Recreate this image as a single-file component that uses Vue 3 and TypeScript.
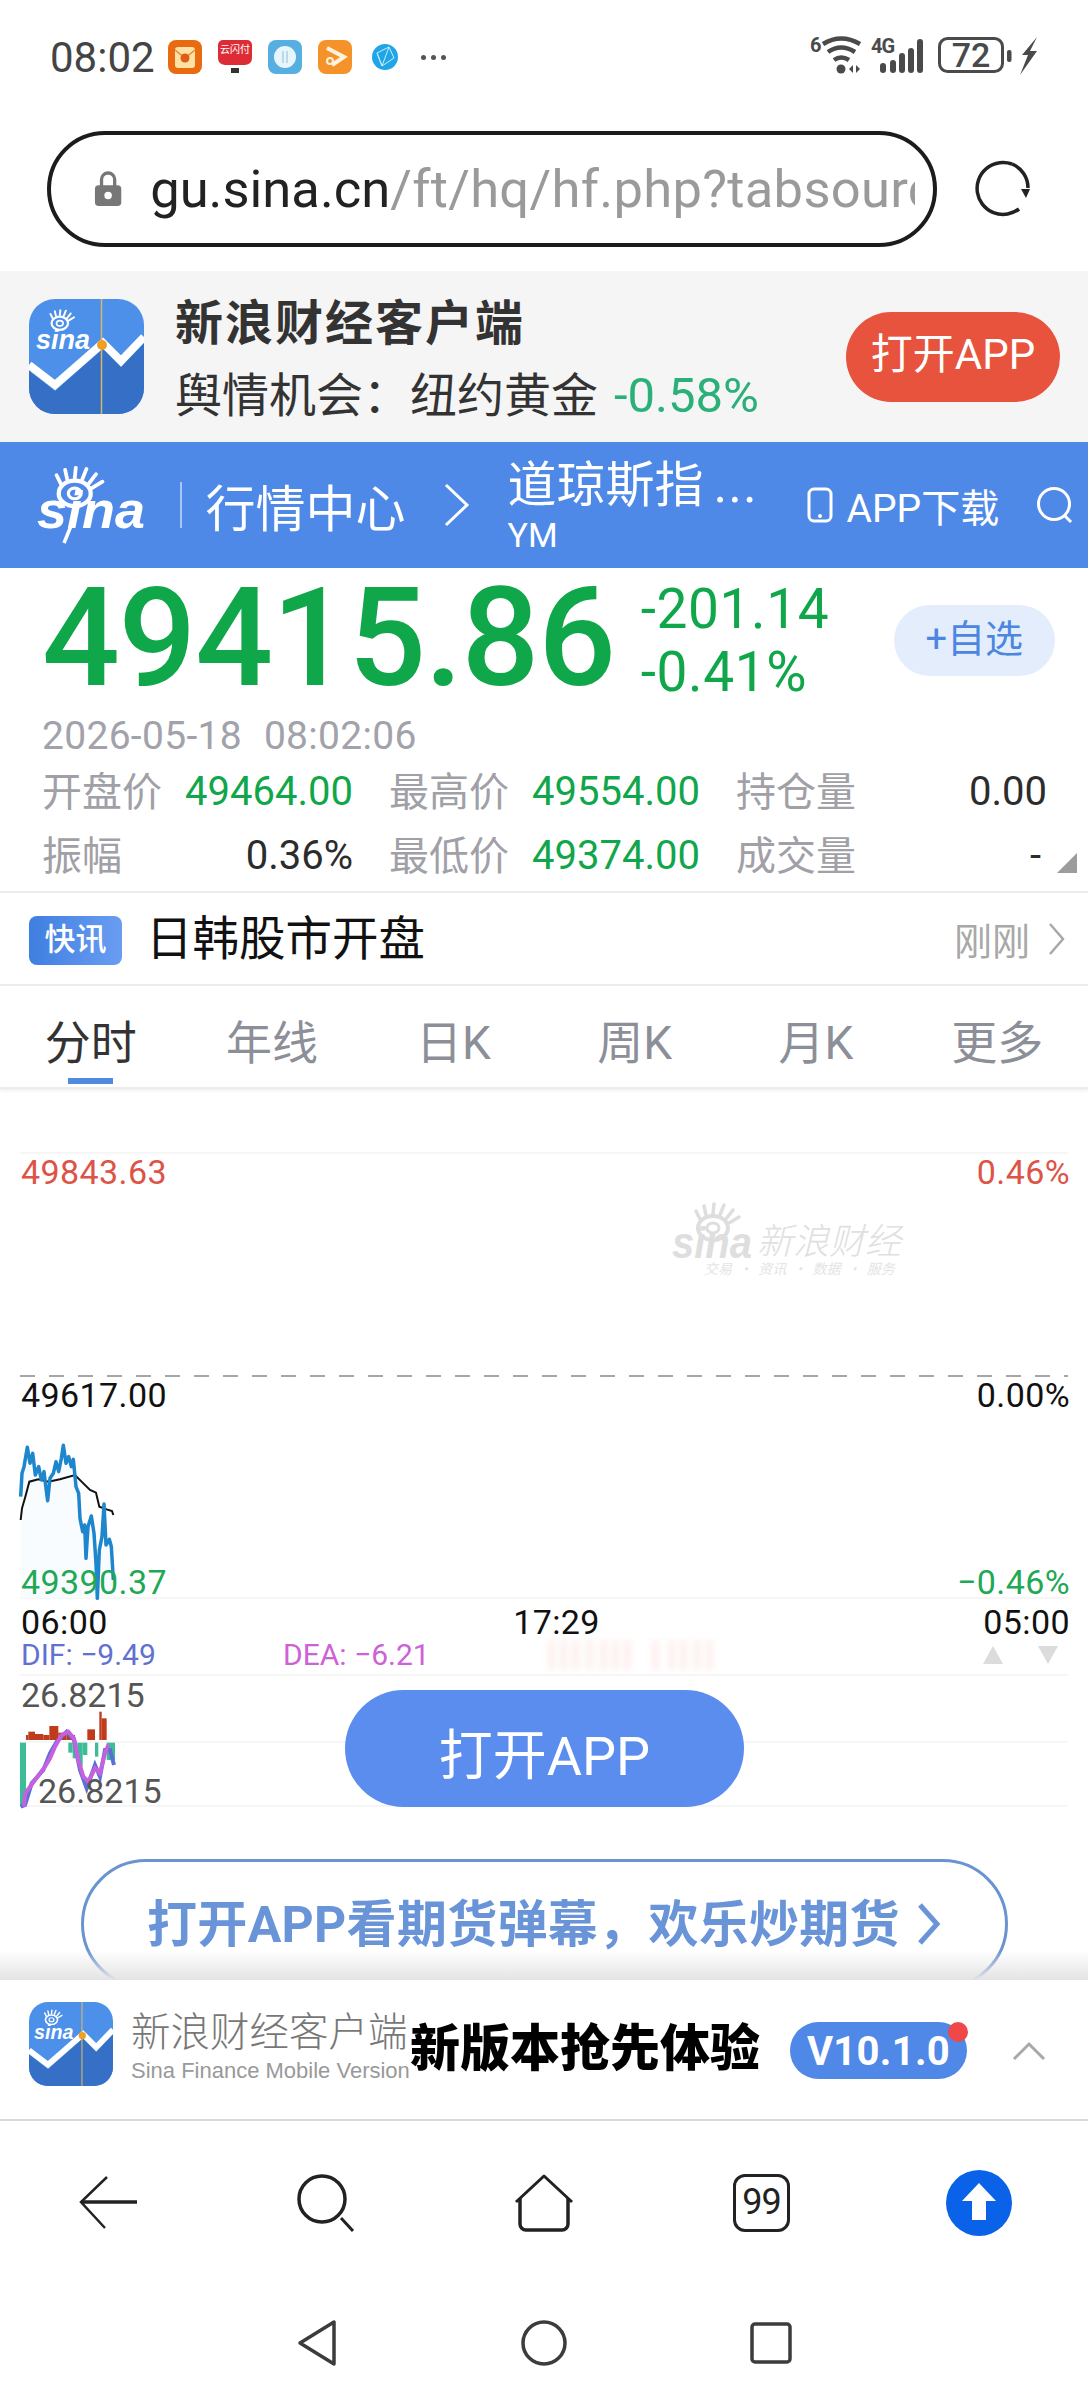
<script setup lang="ts">
interface QuoteCell {
  label: string;
  value: string;
  tone: "down" | "flat";
}

const quoteCells: QuoteCell[] = [
  { label: "开盘价", value: "49464.00", tone: "down" },
  { label: "最高价", value: "49554.00", tone: "down" },
  { label: "持仓量", value: "0.00", tone: "flat" },
  { label: "振幅", value: "0.36%", tone: "flat" },
  { label: "最低价", value: "49374.00", tone: "down" },
  { label: "成交量", value: "-", tone: "flat" },
];

const tabs = ["分时", "年线", "日K", "周K", "月K", "更多"];

// page coordinates, the svg viewBox starts at the top of the chart
const toPath = (pts: number[][]) =>
  "M" + pts.map(([x, y]) => `${x / 3} ${1430 + y / 3}`).join("L");

const priceLine = toPath([
  [62, 200], [66, 130], [72, 110], [82, 52], [90, 100], [98, 70], [106, 135], [116, 110], [124, 150],
  [132, 125], [138, 175], [143, 212], [150, 145], [160, 130], [168, 95], [176, 125], [184, 85], [190, 46],
  [198, 100], [206, 80], [214, 110], [220, 88], [228, 170], [236, 190], [240, 265], [248, 305], [254, 285],
  [258, 385], [264, 290], [274, 258], [282, 310], [288, 400], [292, 505], [298, 360], [306, 320], [312, 222],
  [318, 345], [328, 328], [334, 350], [340, 450],
]);
const avgLine = toPath([
  [62, 270], [66, 235], [76, 200], [88, 155], [115, 148], [145, 155], [180, 148], [225, 135], [250, 160],
  [270, 180], [288, 188], [298, 230], [320, 238], [336, 243], [340, 255],
]);
const fillArea = priceLine + "L113.3 1598L20.6 1598Z";
const deaLine = toPath([
  [72, 1130], [76, 1090], [105, 1050], [135, 1010], [150, 985], [165, 950], [185, 915], [205, 905], [222, 925],
  [235, 990], [250, 1040], [265, 1055], [285, 1015], [300, 1030], [315, 970], [325, 945],
]);
const difLine = toPath([
  [62, 1130], [75, 1125], [95, 1060], [130, 1020], [150, 970], [170, 935], [200, 905], [222, 930], [240, 1020],
  [260, 1075], [285, 1005], [300, 1040], [315, 960], [330, 960], [342, 1005],
]);

// macd bars as [x1, x2, y] in the 3x crop units
const redBars = [
  [78, 85, 915], [85, 105, 905], [105, 130, 912], [130, 148, 915], [148, 175, 888], [175, 200, 908],
  [200, 225, 915], [262, 285, 898], [298, 305, 845], [305, 320, 865],
];
const greenBars = [
  [60, 78, 1130], [205, 218, 968], [218, 232, 985], [232, 248, 1010], [248, 262, 975], [285, 295, 980], [320, 345, 990],
];
const smudges = [548, 560, 572, 586, 600, 612, 624, 652, 668, 680, 694, 706];
</script>

<template>
  <div class="page">
    <svg class="defs" width="0" height="0" aria-hidden="true">
      <symbol id="sina-eye" viewBox="0 0 60 40">
        <ellipse cx="26" cy="26" rx="15" ry="12" fill="none" stroke="currentColor" stroke-width="4" />
        <ellipse cx="26" cy="26" rx="6" ry="5" fill="none" stroke="currentColor" stroke-width="3" />
        <path d="M13 17L9 9M19 13L17 4M26 12L27 2M33 13L37 3M39 17L46 8M42 21L52 15" stroke="currentColor" stroke-width="3.5" stroke-linecap="round" />
      </symbol>
      <symbol id="app-icon" viewBox="0 0 115 115">
        <rect width="115" height="115" rx="26" fill="#4d90ea" />
        <path d="M0 72L26 92L74 50L92 68L115 44V89a26 26 0 0 1-26 26H26A26 26 0 0 1 0 89Z" fill="#3570c6" />
        <path d="M0 66L26 86L74 44L92 62L115 38" fill="none" stroke="#fff" stroke-width="8" />
        <path d="M72.500 0V115" stroke="#d9b566" stroke-width="1.500" />
        <circle cx="73" cy="46" r="5" fill="#f0a020" />
        <use href="#sina-eye" x="16" y="10" width="34" height="22" color="#fff" />
        <text x="7" y="50" class="icon-sina">sina</text>
      </symbol>
    </svg>

    <header class="status">
      <span class="clock">08:02</span>
      <div class="notif">
        <svg width="34" height="34" viewBox="0 0 34 34">
          <rect width="34" height="34" rx="8" fill="#ea6a12" />
          <rect x="7" y="7" width="20" height="21" rx="3" fill="#fde2a6" />
          <path d="M7 10L17 18L27 10" fill="none" stroke="#e28a38" stroke-width="1.500" />
          <circle cx="17" cy="18" r="4.500" fill="#e05a18" />
        </svg>
        <svg width="34" height="34" viewBox="0 0 34 34">
          <path d="M5 0H29A5 5 0 0 1 34 5V18Q34 24 27 25H7Q0 24 0 18V5A5 5 0 0 1 5 0Z" fill="#dd2c35" />
          <text x="17" y="13" class="tiny-pay">云闪付</text>
          <rect x="13" y="28" width="8" height="5" fill="#333" />
        </svg>
        <svg width="34" height="34" viewBox="0 0 34 34">
          <rect width="34" height="34" rx="8" fill="#56afe0" />
          <circle cx="17" cy="17" r="11" fill="#e8f5fc" />
          <path d="M15 11V23M19 11V23" stroke="#a9cfe6" stroke-width="1.500" />
        </svg>
        <svg width="34" height="34" viewBox="0 0 34 34">
          <rect width="34" height="34" rx="8" fill="#f5922a" />
          <path d="M9 8L26 17L14 25" fill="none" stroke="#fff2dc" stroke-width="4" />
          <circle cx="12" cy="21" r="3" fill="none" stroke="#fff2dc" stroke-width="2" />
        </svg>
        <svg class="globe" width="26" height="26" viewBox="0 0 26 26">
          <circle cx="13" cy="13" r="13" fill="#1fa5e8" />
          <path d="M5 9L17 3L22 14L10 22ZM5 9L10 22M17 3L10 22" fill="none" stroke="#cdeefc" stroke-width="1" />
        </svg>
        <span class="more-dots"><i /><i /><i /></span>
      </div>
      <svg class="sys-icons" width="232" height="46" viewBox="0 0 232 46">
        <text x="2" y="18" class="sb-small">6</text>
        <path d="M15 10Q33 -1 52 10" fill="none" stroke="#4a4a4a" stroke-width="4.500" />
        <path d="M20 18Q33 9 47 18" fill="none" stroke="#4a4a4a" stroke-width="4.500" />
        <path d="M26 26Q33 21 41 26" fill="none" stroke="#4a4a4a" stroke-width="4.500" />
        <circle cx="33" cy="35" r="4.500" fill="#4a4a4a" />
        <path d="M41 35L45 31V39ZM48 31V39L52 35Z" fill="#4a4a4a" />
        <text x="63" y="19" class="sb-small">4G</text>
        <rect x="72" y="29" width="6" height="10" rx="3" fill="#4a4a4a" />
        <rect x="82" y="26" width="6" height="13" rx="3" fill="#4a4a4a" />
        <rect x="91" y="19" width="6" height="20" rx="3" fill="#4a4a4a" />
        <rect x="100" y="14" width="6" height="25" rx="3" fill="#4a4a4a" />
        <rect x="109" y="5" width="6" height="34" rx="3" fill="#4a4a4a" />
        <rect x="131.500" y="4.500" width="63" height="33" rx="8" fill="none" stroke="#4a4a4a" stroke-width="3" />
        <text x="163" y="33" class="sb-batt">72</text>
        <rect x="199" y="16" width="4.500" height="12" rx="2" fill="#4a4a4a" />
        <path d="M229 3L214 21L220 21L212 41L229 17L222 17Z" fill="#4a4a4a" />
      </svg>
    </header>

    <div class="address">
      <div class="url-box">
        <svg width="30" height="38" viewBox="0 0 30 38">
          <path d="M8 16V9a7 7 0 0 1 14 0V16" fill="none" stroke="#777" stroke-width="3.500" />
          <rect x="1" y="15" width="28" height="22" rx="4" fill="#777" />
          <circle cx="15" cy="26" r="4" fill="#fff" />
        </svg>
        <span class="url"><b>gu.sina.cn</b>/ft/hq/hf.php?tabsource</span>
      </div>
      <svg class="reload" width="58" height="58" viewBox="0 0 58 58">
        <path d="M39 4A26 26 0 1 0 46 49" fill="none" stroke="#222" stroke-width="3.500" />
        <path d="M39 4A26 26 0 0 1 55 28" fill="none" stroke="#222" stroke-width="3.500" />
        <path d="M48 29H57L53 38Z" fill="#222" />
      </svg>
    </div>

    <section class="promo">
      <svg class="promo-icon" viewBox="0 0 115 115"><use href="#app-icon" /></svg>
      <div class="promo-text">
        <div class="promo-title">新浪财经客户端</div>
        <div class="promo-sub">舆情机会：纽约黄金<span class="promo-pct">-0.58%</span></div>
      </div>
      <div class="promo-btn">打开APP</div>
    </section>

    <nav class="topbar">
      <svg class="logo" width="110" height="78" viewBox="0 0 110 78">
        <use href="#sina-eye" x="10" y="-1" width="64" height="44" color="#fff" />
        <text x="0" y="62" class="logo-text" textLength="108" lengthAdjust="spacingAndGlyphs">sina</text>
        <path d="M34 60L27 77" stroke="#fff" stroke-width="3.500" />
      </svg>
      <span class="sep" />
      <span class="crumb">行情中心</span>
      <svg class="crumb-arrow" width="28" height="44" viewBox="0 0 28 44">
        <path d="M4 2L25 22L4 42" fill="none" stroke="#fff" stroke-width="3" />
      </svg>
      <div class="symbol">
        <div class="symbol-name">道琼斯指<span class="dots">...</span></div>
        <div class="symbol-code">YM</div>
      </div>
      <svg class="phone" width="26" height="36" viewBox="0 0 26 36">
        <rect x="2" y="2" width="22" height="32" rx="5" fill="none" stroke="#fff" stroke-width="3" />
        <circle cx="13" cy="29" r="2" fill="#fff" />
      </svg>
      <span class="download">APP下载</span>
      <svg class="search" width="38" height="38" viewBox="0 0 38 38">
        <circle cx="18" cy="18" r="15.500" fill="none" stroke="#fff" stroke-width="3" />
        <path d="M28 29L35 36" stroke="#fff" stroke-width="3" />
      </svg>
    </nav>

    <section class="quote">
      <div class="quote-top">
        <div class="price">49415.86</div>
        <div class="change">
          <div>-201.14</div>
          <div>-0.41%</div>
        </div>
        <div class="watch">+自选</div>
      </div>
      <div class="stamp"><span>2026-05-18</span><span>08:02:06</span></div>
      <div class="grid">
        <div v-for="cell in quoteCells" :key="cell.label" class="cell">
          <span class="cell-label">{{ cell.label }}</span>
          <span class="cell-value" :class="cell.tone">{{ cell.value }}</span>
        </div>
      </div>
      <span class="corner" />
    </section>

    <section class="news">
      <span class="news-tag">快讯</span>
      <span class="news-title">日韩股市开盘</span>
      <span class="news-time">刚刚</span>
      <svg width="18" height="36" viewBox="0 0 18 36">
        <path d="M2 3L15 18L2 33" fill="none" stroke="#a8a8a8" stroke-width="2.500" />
      </svg>
    </section>

    <div class="tabs">
      <span v-for="(tab, i) in tabs" :key="tab" class="tab" :class="{ active: i === 0 }">{{ tab }}</span>
    </div>

    <main class="chart">
      <svg class="plot" width="1088" height="891" viewBox="0 1089 1088 891">
        <defs>
          <filter id="soft"><feGaussianBlur stdDeviation="3" /></filter>
        </defs>
        <path d="M20 1153H1068M20 1598H1068M20 1675H1068M20 1742H1068M20 1806H1068" stroke="#f3f3f3" stroke-width="1.500" />
        <path d="M20 1376H1068" stroke="#a6a6a6" stroke-width="2" stroke-dasharray="15 14" />
        <path :d="fillArea" fill="#f9fcff" />
        <path :d="avgLine" fill="none" stroke="#111" stroke-width="2" />
        <path :d="priceLine" fill="none" stroke="#1e86cc" stroke-width="3.500" stroke-linejoin="round" />
        <rect
          v-for="bar in redBars"
          :key="bar[0]"
          :x="bar[0] / 3"
          :y="1430 + bar[2] / 3"
          :width="(bar[1] - bar[0]) / 3"
          :height="(930 - bar[2]) / 3"
          fill="#c03a1c"
        />
        <rect
          v-for="bar in greenBars"
          :key="bar[0]"
          :x="bar[0] / 3"
          :y="1430 + 938 / 3"
          :width="(bar[1] - bar[0]) / 3"
          :height="(bar[2] - 938) / 3"
          fill="#3cbd98"
        />
        <path :d="difLine" fill="none" stroke="#5a70d2" stroke-width="4" />
        <path :d="deaLine" fill="none" stroke="#c560e0" stroke-width="4" />
        <g filter="url(#soft)" opacity="0.22">
          <rect v-for="x in smudges" :key="x" :x="x" y="1640" width="7" height="30" fill="#f2b9b0" />
        </g>
        <path d="M640 1661H718" stroke="#efb0a8" stroke-width="2" filter="url(#soft)" />
        <g class="mark">
          <use href="#sina-eye" x="686" y="1202" width="62" height="40" color="#dedede" />
          <text x="672" y="1258" class="mark-logo" textLength="80" lengthAdjust="spacingAndGlyphs">sina</text>
          <text x="757" y="1254" class="mark-cn">新浪财经</text>
          <text x="704" y="1274" class="mark-sub">交易 · 资讯 · 数据 · 服务</text>
        </g>
      </svg>

      <div class="axis axis-hi"><span>49843.63</span><span>0.46%</span></div>
      <div class="axis axis-mid"><span>49617.00</span><span>0.00%</span></div>
      <div class="axis axis-lo"><span>49390.37</span><span>−0.46%</span></div>
      <div class="axis axis-time"><span>06:00</span><span class="mid-time">17:29</span><span>05:00</span></div>
      <div class="macd-legend">
        <span class="dif">DIF: −9.49</span>
        <span class="dea">DEA: −6.21</span>
        <span class="arrows"><i class="up" /><i class="down" /></span>
      </div>
      <div class="vol vol-top">26.8215</div>
      <div class="vol vol-bottom">26.8215</div>

      <div class="barrage"><span>打开APP看期货弹幕，欢乐炒期货</span>
        <svg width="26" height="44" viewBox="0 0 26 44">
          <path d="M4 3L21 22L4 41" fill="none" stroke="#6a94d8" stroke-width="5" />
        </svg>
      </div>

      <div class="float-open">打开APP</div>
      <div class="fade" />
    </main>

    <section class="upgrade">
      <svg class="upgrade-icon" viewBox="0 0 115 115"><use href="#app-icon" /></svg>
      <div class="upgrade-brand">
        <div class="brand-cn">新浪财经客户端</div>
        <div class="brand-en">Sina Finance Mobile Version</div>
      </div>
      <div class="upgrade-title">新版本抢先体验</div>
      <div class="version">V10.1.0<i /></div>
      <svg class="caret" width="34" height="20" viewBox="0 0 34 20">
        <path d="M2 18L17 3L32 18" fill="none" stroke="#a8a8a8" stroke-width="3" />
      </svg>
    </section>

    <nav class="browser-nav">
      <svg width="60" height="54" viewBox="0 0 60 54">
        <path d="M2 26H58" stroke="#222" stroke-width="3.500" />
        <path d="M28 1L2 26L26 52" fill="none" stroke="#222" stroke-width="2.500" />
      </svg>
      <svg width="58" height="58" viewBox="0 0 58 58">
        <circle cx="25" cy="25" r="23" fill="none" stroke="#222" stroke-width="3.500" />
        <path d="M44 44L56 57" stroke="#222" stroke-width="3" />
      </svg>
      <svg width="62" height="58" viewBox="0 0 62 58">
        <path d="M3 28L31 2L59 28" fill="none" stroke="#222" stroke-width="3" stroke-linejoin="round" />
        <path d="M7 24V50a6 6 0 0 0 6 6H49a6 6 0 0 0 6-6V24" fill="none" stroke="#222" stroke-width="3.500" />
      </svg>
      <div class="tab-count">99</div>
      <svg width="66" height="66" viewBox="0 0 66 66">
        <circle cx="33" cy="33" r="33" fill="#0a62e8" />
        <path d="M33 13L50 31H40V50H26V31H16Z" fill="#fff" />
      </svg>
    </nav>

    <nav class="system-nav">
      <svg width="40" height="48" viewBox="0 0 40 48">
        <path d="M37 3V45L3 24Z" fill="none" stroke="#3c3c3c" stroke-width="3.500" stroke-linejoin="round" />
      </svg>
      <svg width="46" height="46" viewBox="0 0 46 46">
        <circle cx="23" cy="23" r="21" fill="none" stroke="#3c3c3c" stroke-width="3.500" />
      </svg>
      <svg width="42" height="42" viewBox="0 0 42 42">
        <rect x="2" y="2" width="38" height="38" rx="3" fill="none" stroke="#3c3c3c" stroke-width="3.500" />
      </svg>
    </nav>
  </div>
</template>

<style>
html,
body {
  margin: 0;
  background: #fff;
}
</style>

<style scoped>
.page {
  position: relative;
  width: 1088px;
  height: 2400px;
  overflow: hidden;
  background: #fff;
  font-family: Roboto, "Noto Sans CJK SC", sans-serif;
}
.defs {
  position: absolute;
}
.icon-sina {
  font: italic 700 27px "Liberation Sans", sans-serif;
  fill: #fff;
}

/* status bar */
.status {
  display: flex;
  align-items: center;
  height: 114px;
  padding-left: 50px;
  color: #444;
}
.clock {
  font-size: 42px;
  width: 118px;
}
.notif {
  display: flex;
  align-items: center;
  gap: 16px;
}
.globe {
  margin-left: 4px;
}
.more-dots {
  display: flex;
  gap: 5px;
  margin-left: 7px;
}
.more-dots i {
  width: 5px;
  height: 5px;
  border-radius: 50%;
  background: #555;
}
.sys-icons {
  margin-left: auto;
  margin-right: 48px;
}
.tiny-pay {
  font-size: 10px;
  fill: #fff;
  text-anchor: middle;
}
.sb-small {
  font: 700 20px Roboto, sans-serif;
  fill: #4a4a4a;
  letter-spacing: -1px;
}
.sb-batt {
  font: 500 34px Roboto, sans-serif;
  fill: #4a4a4a;
  text-anchor: middle;
}

/* address bar */
.address {
  display: flex;
  align-items: center;
  height: 157px;
  padding-left: 47px;
}
.url-box {
  display: flex;
  align-items: center;
  box-sizing: border-box;
  width: 890px;
  height: 116px;
  margin-top: -7px;
  padding: 0 18px 0 43px;
  border: 4px solid #1c1c1c;
  border-radius: 58px;
}
.url {
  margin-left: 28px;
  overflow: hidden;
  white-space: nowrap;
  font-size: 52.500px;
  letter-spacing: 0.3px;
  color: #9a9a9a;
}
.url b {
  font-weight: 400;
  letter-spacing: 0;
  color: #222;
}
.reload {
  margin: -7px 0 0 36px;
}

/* download banner */
.promo {
  display: flex;
  align-items: center;
  height: 171px;
  background: #f5f5f5;
  padding: 0 28px 0 29px;
}
.promo-icon {
  width: 115px;
  height: 115px;
}
.promo-text {
  margin: 6px 0 0 31px;
  color: #333;
}
.promo-title {
  font-size: 48px;
  font-weight: 700;
  letter-spacing: 2px;
  line-height: 66px;
}
.promo-sub {
  margin-top: 6px;
  font-size: 47px;
  line-height: 66px;
}
.promo-pct {
  margin-left: 16px;
  font-size: 49px;
  color: #2bb07a;
}
.promo-btn {
  margin-left: auto;
  width: 214px;
  height: 90px;
  border-radius: 45px;
  background: #e8533e;
  color: #fff;
  font-size: 42px;
  line-height: 86px;
  text-align: center;
}

/* blue nav */
.topbar {
  display: flex;
  align-items: center;
  height: 126px;
  background: #4f89e8;
  color: #fff;
  padding-left: 37px;
}
.logo-text {
  font: italic 700 52px "Liberation Sans", sans-serif;
  fill: #fff;
}
.sep {
  width: 1.500px;
  height: 46px;
  margin-left: 33px;
  background: #a9c6f4;
}
.crumb {
  margin-left: 24px;
  font-size: 50px;
}
.crumb-arrow {
  margin-left: 36px;
}
.symbol {
  width: 294px;
  margin-left: 38px;
}
.symbol-name {
  font-size: 49px;
  line-height: 60px;
  margin-top: -2px;
}
.dots {
  margin-left: 10px;
  font-size: 52px;
  letter-spacing: 1px;
}
.symbol-code {
  font-size: 34px;
  line-height: 38px;
}
.download {
  margin-left: 14px;
  font-size: 39px;
}
.phone {
  margin-left: 5px;
}
.search {
  margin-left: 37px;
}

/* quote */
.quote {
  position: relative;
  height: 325px;
  padding-left: 42px;
  box-sizing: border-box;
  border-bottom: 2px solid #ececec;
}
.quote-top {
  display: flex;
  height: 150px;
}
.price {
  font-size: 137px;
  font-weight: 500;
  letter-spacing: -1.3px;
  line-height: 140px;
  color: #10a64a;
}
.change {
  margin: 10px 0 0 26px;
  width: 253px;
  font-size: 55px;
  letter-spacing: 0.6px;
  line-height: 63px;
  color: #10a64a;
}
.watch {
  width: 161px;
  height: 71px;
  margin-top: 37px;
  border-radius: 36px;
  background: #e4edfb;
  color: #4d86e0;
  font-size: 38px;
  line-height: 68px;
  text-align: center;
}
.stamp {
  display: flex;
  gap: 22px;
  height: 36px;
  font-size: 39px;
  letter-spacing: 0.3px;
  line-height: 36px;
  color: #a2a2aa;
}
.grid {
  display: grid;
  grid-template-columns: repeat(3, 311px);
  grid-auto-rows: 64px;
  column-gap: 36px;
  margin-top: 5px;
}
.cell {
  display: flex;
  justify-content: space-between;
  align-items: center;
}
.cell-label {
  margin-bottom: 5px;
  font-size: 40px;
  color: #a0a0a6;
}
.cell-value {
  font-size: 40px;
}
.cell-value.down {
  color: #10a64a;
}
.cell-value.flat {
  color: #2c2c2c;
}
.cell:last-child .cell-value {
  margin-right: 6px;
}
.corner {
  position: absolute;
  right: 11px;
  bottom: 18px;
  width: 0;
  height: 0;
  border-left: 20px solid transparent;
  border-bottom: 20px solid #9c9c9c;
}

/* news ticker */
.news {
  display: flex;
  align-items: center;
  height: 93px;
  box-sizing: border-box;
  border-bottom: 2px solid #ececec;
  padding: 0 22px 0 29px;
}
.news-tag {
  width: 93px;
  height: 49px;
  margin-top: 4px;
  border-radius: 8px;
  background: linear-gradient(90deg, #3f7fe0, #6a9df2);
  color: #fff;
  font-size: 31px;
  font-weight: 500;
  line-height: 47px;
  text-align: center;
}
.news-title {
  margin: 0 0 8px 24px;
  font-size: 46.500px;
  color: #111;
}
.news-time {
  margin-left: auto;
  margin-right: 18px;
  font-size: 38px;
  color: #a8a8a8;
}

/* period tabs */
.tabs {
  display: grid;
  grid-template-columns: repeat(6, 1fr);
  grid-template-rows: 101px;
  height: 103px;
  box-sizing: border-box;
  border-bottom: 2px solid #ececec;
  box-shadow: 0 2px 3px #f0f0f0;
}
.tab {
  position: relative;
  font-size: 46px;
  line-height: 114px;
  text-align: center;
  color: #8c8f98;
}
.tab.active {
  color: #333;
}
.tab.active::after {
  content: "";
  position: absolute;
  left: 68px;
  bottom: 3px;
  width: 45px;
  height: 6px;
  background: #4f89e0;
}

/* chart */
.chart {
  position: relative;
  height: 891px;
  overflow: hidden;
}
.plot {
  position: absolute;
  left: 0;
  top: 0;
}
.mark-logo {
  font: italic 700 44px "Liberation Sans", sans-serif;
  fill: #dedede;
}
.mark-cn {
  font: italic 300 36px "Noto Sans CJK SC", sans-serif;
  fill: #e0e0e0;
}
.mark-sub {
  font: italic 14px "Noto Sans CJK SC", sans-serif;
  fill: #e4e4e4;
  word-spacing: 3px;
}
.axis {
  position: relative;
  display: flex;
  justify-content: space-between;
  padding: 0 18px 0 21px;
  font-size: 34px;
  letter-spacing: 0.4px;
  line-height: 40px;
}
.axis-hi {
  margin-top: 63px;
  color: #dd5447;
}
.axis-mid {
  margin-top: 183px;
  color: #111;
}
.axis-lo {
  margin-top: 147px;
  color: #1fa855;
}
.axis-time {
  color: #111;
}
.mid-time {
  margin-left: 22px;
}
.macd-legend {
  position: relative;
  display: flex;
  padding-left: 21px;
  font-size: 30px;
  line-height: 26px;
}
.dif {
  width: 262px;
  color: #6071cf;
}
.dea {
  color: #cc62d6;
}
.arrows {
  display: flex;
  gap: 35px;
  align-items: center;
  margin-left: auto;
  margin-right: 30px;
}
.arrows i {
  border-left: 10.500px solid transparent;
  border-right: 10.500px solid transparent;
}
.arrows .up {
  border-bottom: 18px solid #dcdcdc;
}
.arrows .down {
  border-top: 18px solid #dcdcdc;
}
.vol {
  position: relative;
  font-size: 34px;
  line-height: 40px;
  color: #555;
}
.vol-top {
  margin: 7px 0 0 21px;
}
.vol-bottom {
  margin: 56px 0 0 38px;
}
.barrage {
  position: relative;
  display: flex;
  align-items: center;
  justify-content: center;
  gap: 16px;
  box-sizing: border-box;
  height: 130px;
  margin: 48px 80px 0 81px;
  border: 3px solid #6a94d0;
  border-radius: 65px;
  color: #6a94d8;
  font-size: 50px;
  font-weight: 700;
  letter-spacing: 0.3px;
  white-space: nowrap;
}
.barrage span {
  margin-bottom: 8px;
}
.float-open {
  position: absolute;
  left: 345px;
  top: 601px;
  width: 399px;
  height: 117px;
  border-radius: 59px;
  background: #5b8def;
  color: #fff;
  font-size: 54px;
  line-height: 133px;
  text-align: center;
}
.fade {
  position: absolute;
  left: 0;
  right: 0;
  bottom: 0;
  height: 30px;
  background: linear-gradient(rgba(225, 225, 225, 0), #e4e4e4);
}

/* upgrade strip */
.upgrade {
  display: flex;
  align-items: center;
  height: 141px;
  box-sizing: border-box;
  border-bottom: 2px solid #dadada;
  padding: 0 0 12px 29px;
}
.upgrade-icon {
  width: 84px;
  height: 84px;
  flex: none;
}
.upgrade-brand {
  width: 279px;
  margin: 8px 0 0 18px;
  white-space: nowrap;
}
.brand-cn {
  font-size: 39.500px;
  font-weight: 300;
  line-height: 46px;
  color: #777;
}
.brand-en {
  font: 22px/30px "Liberation Sans", sans-serif;
  color: #999;
}
.upgrade-title {
  font-size: 50px;
  font-weight: 900;
  color: #000;
  white-space: nowrap;
}
.version {
  position: relative;
  width: 177px;
  height: 57px;
  margin: 14px 0 0 30px;
  border-radius: 29px;
  background: #4f88e6;
  color: #fff;
  font-size: 40px;
  font-weight: 700;
  letter-spacing: 0.3px;
  line-height: 59px;
  text-align: center;
}
.version i {
  position: absolute;
  right: -1px;
  top: 0;
  width: 20px;
  height: 20px;
  border-radius: 50%;
  background: #f04848;
}
.caret {
  margin: 14px 0 0 45px;
}

/* bottom navs */
.browser-nav {
  display: grid;
  grid-template-columns: repeat(5, 1fr);
  align-items: center;
  justify-items: center;
  height: 164px;
}
.tab-count {
  box-sizing: border-box;
  width: 57px;
  height: 58px;
  border: 3.500px solid #222;
  border-radius: 12px;
  font-size: 36px;
  letter-spacing: -1px;
  line-height: 50px;
  text-align: center;
  color: #222;
}
.system-nav {
  display: grid;
  grid-template-columns: repeat(3, 227px);
  align-items: center;
  justify-items: center;
  justify-content: center;
  height: 115px;
}
</style>
